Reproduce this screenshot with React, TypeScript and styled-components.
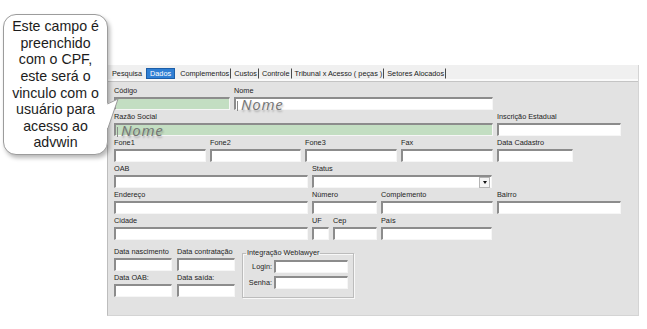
import styled, { createGlobalStyle } from 'styled-components';

const GlobalStyle = createGlobalStyle`
  body {
    margin: 0;
    background: #ffffff;
    font-family: "Liberation Sans", Arial, sans-serif;
  }
`;

const Stage = styled.div`
  position: relative;
  width: 647px;
  height: 329px;
  box-sizing: border-box;
  padding: 65px 8px 13px 107px;
  overflow: hidden;
`;

const Window = styled.div`
  height: 100%;
  display: flex;
  flex-direction: column;
  border-left: 1px solid #bdbdbd;
  border-right: 1px solid #d4d4d4;
  border-bottom: 1px solid #d4d4d4;
  box-sizing: border-box;
`;

const TabStrip = styled.div`
  height: 16px;
  flex: none;
  display: flex;
  align-items: center;
  padding-left: 1px;
  background: #f0f0f0;
  border-bottom: 1px solid #c4c4c4;
  box-shadow: inset 0 -2px 0 #fafafa;
`;

const Tab = styled.div<{ $active?: boolean; $sep?: boolean }>`
  font-size: 7.3px;
  height: 11px;
  line-height: 9px;
  box-sizing: border-box;
  padding: ${(p) => (p.$active ? '0 3px' : '0 1px 0 2px')};
  margin: ${(p) => (p.$active ? '0 2px' : '0')};
  white-space: nowrap;
  color: ${(p) => (p.$active ? '#ffffff' : '#1a1a1a')};
  background: ${(p) => (p.$active ? '#2f7fd4' : 'transparent')};
  border: 1px solid ${(p) => (p.$active ? '#1c5ea8' : 'transparent')};
  border-right-color: ${(p) => (p.$active ? '#1c5ea8' : p.$sep ? '#4a4a4a' : 'transparent')};
`;

const Panel = styled.div`
  flex: 1;
  background: #e2e2e2;
  padding: 5px 0 0 6px;
  display: flex;
  flex-direction: column;
  gap: 3px;
`;

const Row = styled.div`
  display: flex;
  gap: 4px;
`;

const Field = styled.div<{ $w: number }>`
  width: ${(p) => p.$w}px;
  display: flex;
  flex-direction: column;
  gap: 2px;
  flex: none;
`;

const Label = styled.div`
  font-size: 7.3px;
  height: 8px;
  line-height: 8px;
  color: #1e1e1e;
  white-space: nowrap;
`;

const Input = styled.div<{ $green?: boolean }>`
  position: relative;
  height: 13px;
  box-sizing: border-box;
  background: ${(p) => (p.$green ? '#c3dec2' : '#ffffff')};
  border-top: 2px solid #8c8c8c;
  border-left: 2px solid #8c8c8c;
  border-right: 1px solid #f6f6f6;
  border-bottom: 1px solid #f6f6f6;
  display: flex;
  align-items: center;
`;

const HintText = styled.span`
  font-family: "Open Sans", "DejaVu Sans", sans-serif;
  font-style: italic;
  font-size: 15px;
  line-height: 11px;
  color: #747474;
  letter-spacing: 0.7px;
  padding-left: 1px;
  margin-top: 1px;
  text-shadow: 1px 2px 2px rgba(0, 0, 0, 0.25);
  white-space: nowrap;

  &::before {
    content: '';
    display: inline-block;
    width: 1px;
    height: 10px;
    margin-right: 3px;
    background: #8a8a8a;
    vertical-align: -1px;
  }
`;

const DropButton = styled.div`
  position: absolute;
  right: 1px;
  top: 0;
  width: 9px;
  height: 9px;
  background: #f4f4f4;
  border: 1px solid #b5b5b5;
  display: flex;
  align-items: center;
  justify-content: center;

  &::after {
    content: '';
    border-left: 2px solid transparent;
    border-right: 2px solid transparent;
    border-top: 3px solid #111;
  }
`;

const BottomRow = styled.div`
  display: flex;
  gap: 7px;
  margin-top: 5px;
  align-items: flex-start;
`;

const DateGrid = styled.div`
  display: grid;
  grid-template-columns: 58px 58px;
  column-gap: 5px;
  row-gap: 3px;
`;

const Group = styled.fieldset`
  margin: 1px 0 0 0;
  width: 110px;
  box-sizing: border-box;
  padding: 3px 5px 8px 0;
  border: 1px solid #bcbcbc;
  box-shadow: inset 1px 1px 0 #f8f8f8, 1px 1px 0 #f8f8f8;
  display: flex;
  flex-direction: column;
  gap: 3px;
`;

const Legend = styled.legend`
  font-size: 7.3px;
  line-height: 8px;
  padding: 0 1px;
  margin-left: 3px;
  color: #1e1e1e;
`;

const LoginRow = styled.div`
  display: flex;
  align-items: center;
  gap: 2px;
`;

const LoginLabel = styled.div`
  width: 29px;
  text-align: right;
  font-size: 7.3px;
  color: #1e1e1e;
`;

const LoginInput = styled(Input)`
  width: 74px;
`;

const Callout = styled.div`
  position: absolute;
  left: 3px;
  top: 14px;
  width: 105px;
  height: 141px;
  box-sizing: border-box;
  background: #ffffff;
  border: 1px solid #9c9c9c;
  border-radius: 13px;
  box-shadow: 2px 3px 4px rgba(0, 0, 0, 0.28);
  display: flex;
  align-items: center;
  justify-content: center;
  text-align: center;
  font-size: 14.2px;
  line-height: 16.6px;
  color: #1c1c1c;
`;

const Tail = styled.svg`
  position: absolute;
  left: 104px;
  top: 97px;
`;

type F = { label: string; w: number; green?: boolean; hint?: boolean; select?: boolean };

const rows: F[][] = [
  [
    { label: 'Código', w: 116, green: true },
    { label: 'Nome', w: 259, hint: true },
  ],
  [
    { label: 'Razão Social', w: 379, green: true, hint: true },
    { label: 'Inscrição Estadual', w: 124 },
  ],
  [
    { label: 'Fone1', w: 92 },
    { label: 'Fone2', w: 91 },
    { label: 'Fone3', w: 92 },
    { label: 'Fax', w: 92 },
    { label: 'Data Cadastro', w: 76 },
  ],
  [
    { label: 'OAB', w: 194 },
    { label: 'Status', w: 180, select: true },
  ],
  [
    { label: 'Endereço', w: 194 },
    { label: 'Número', w: 65 },
    { label: 'Complemento', w: 112 },
    { label: 'Bairro', w: 124 },
  ],
  [
    { label: 'Cidade', w: 194 },
    { label: 'UF', w: 17 },
    { label: 'Cep', w: 44 },
    { label: 'País', w: 111 },
  ],
];

const tabs = [
  'Pesquisa',
  'Dados',
  'Complementos',
  'Custos',
  'Controle',
  'Tribunal x Acesso ( peças )',
  'Setores Alocados',
];

export default function App() {
  return (
    <>
      <GlobalStyle />
      <Stage>
        <Window>
          <TabStrip>
            {tabs.map((t, i) => (
              <Tab key={t} $active={i === 1} $sep={i > 1}>
                {t}
              </Tab>
            ))}
          </TabStrip>
          <Panel>
            {rows.map((r, i) => (
              <Row key={i}>
                {r.map((f) => (
                  <Field key={f.label} $w={f.w}>
                    <Label>{f.label}</Label>
                    <Input $green={f.green}>
                      {f.hint && <HintText>Nome</HintText>}
                      {f.select && <DropButton />}
                    </Input>
                  </Field>
                ))}
              </Row>
            ))}
            <BottomRow>
              <DateGrid>
                {['Data nascimento', 'Data contratação', 'Data OAB:', 'Data saída:'].map((l) => (
                  <Field key={l} $w={58}>
                    <Label>{l}</Label>
                    <Input />
                  </Field>
                ))}
              </DateGrid>
              <Group>
                <Legend>Integração Weblawyer</Legend>
                <LoginRow>
                  <LoginLabel>Login:</LoginLabel>
                  <LoginInput />
                </LoginRow>
                <LoginRow>
                  <LoginLabel>Senha:</LoginLabel>
                  <LoginInput />
                </LoginRow>
              </Group>
            </BottomRow>
          </Panel>
        </Window>
        <Callout>
          Este campo é
          <br />
          preenchido
          <br />
          com o CPF,
          <br />
          este será o
          <br />
          vinculo com o
          <br />
          usuário para
          <br />
          acesso ao
          <br />
          advwin
        </Callout>
        <Tail width="16" height="34" viewBox="0 0 16 34">
          <polygon points="0,8 14,2 4,31 0,31" fill="#ffffff" />
          <polyline points="3.5,7 14,2 4,31" fill="none" stroke="#9c9c9c" strokeWidth="1" />
        </Tail>
      </Stage>
    </>
  );
}
